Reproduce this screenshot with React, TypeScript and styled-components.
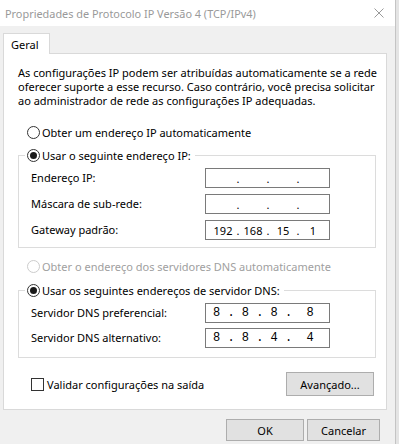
import React from "react";
import styled, { createGlobalStyle } from "styled-components";

const GlobalStyle = createGlobalStyle`
  html, body {
    margin: 0;
    padding: 0;
    background: #f0f0f0;
  }
  body {
    font-family: "Noto Sans", "Open Sans", sans-serif;
    font-size: 11px;
    color: #000;
  }
  * {
    box-sizing: border-box;
  }
`;

const Screen = styled.div`
  display: flex;
  width: 399px;
  height: 444px;
  overflow: hidden;
`;

const Window = styled.div`
  width: 395px;
  display: flex;
  flex-direction: column;
  background: #f0f0f0;
`;

const WindowEdge = styled.div`
  width: 4px;
  border-left: 1px solid #c4c4c4;
  background: #e4e4e4;
`;

const TitleBar = styled.div`
  height: 26px;
  flex-shrink: 0;
  background: #fff;
  display: flex;
  align-items: center;
  justify-content: space-between;
  padding: 0 11px 0 5px;
`;

const Title = styled.span`
  color: #999;
  font-size: 10.9px;
  white-space: nowrap;
`;

const Body = styled.div`
  display: flex;
  flex-direction: column;
  padding: 7px 8px 0 3px;
`;

const TabStrip = styled.div`
  display: flex;
`;

const Tab = styled.div`
  position: relative;
  z-index: 1;
  width: 47px;
  height: 21px;
  margin-bottom: -1px;
  padding-left: 7px;
  display: flex;
  align-items: center;
  background: #fff;
  border: 1px solid #d9d9d9;
  border-bottom: none;
`;

const Panel = styled.div`
  display: flex;
  flex-direction: column;
  background: #fff;
  border: 1px solid #d9d9d9;
  padding: 12px 10px 13px 14px;
`;

const Intro = styled.p`
  margin: 0;
  line-height: 14px;
  white-space: nowrap;
`;

const OptionRow = styled.div<{ $top: number }>`
  display: flex;
  align-items: center;
  height: 16px;
  margin-top: ${({ $top }) => $top}px;
  padding-left: 9px;
`;

const RadioDot = styled.span<{ $checked?: boolean; $disabled?: boolean }>`
  width: 13px;
  height: 13px;
  flex-shrink: 0;
  border-radius: 50%;
  border: 1px solid ${({ $disabled }) => ($disabled ? "#cccccc" : "#333")};
  background: #fff;
  display: grid;
  place-items: center;

  &::after {
    content: "";
    width: 7px;
    height: 7px;
    border-radius: 50%;
    background: #1a1a1a;
    display: ${({ $checked }) => ($checked ? "block" : "none")};
  }
`;

const OptionText = styled.span<{ $disabled?: boolean }>`
  margin-left: 2px;
  white-space: nowrap;
  color: ${({ $disabled }) => ($disabled ? "#a0a0a0" : "#000")};
`;

const Group = styled.fieldset<{ $top: number; $bottom: number }>`
  margin: ${({ $top }) => $top}px 0 0 0;
  min-width: 0;
  border: 1px solid #dcdcdc;
  padding: 5px 0 ${({ $bottom }) => $bottom}px 6px;
`;

const GroupLegend = styled.legend`
  padding: 0 4px 0 2px;
`;

const LegendInner = styled.span`
  display: flex;
  align-items: center;
  height: 16px;
`;

const FieldGrid = styled.div<{ $gap: number }>`
  display: grid;
  grid-template-columns: 174px 125px;
  row-gap: ${({ $gap }) => $gap}px;
  align-items: center;
  margin-left: 6px;
`;

const FieldLabel = styled.span`
  line-height: 20px;
  white-space: nowrap;
`;

const IpBox = styled.div`
  height: 20px;
  border: 1px solid #7a7a7a;
  background: #fff;
  display: flex;
  align-items: center;
  padding-left: 4px;
`;

const Segment = styled.span`
  width: 26px;
  text-align: center;
`;

const Dot = styled.span`
  width: 4px;
  text-align: center;
`;

const MonoBox = styled.div`
  height: 20px;
  border: 1px solid #7a7a7a;
  background: #fff;
  display: flex;
  align-items: center;
  padding-left: 7px;
  font-family: "Liberation Mono", monospace;
  font-size: 12px;
  white-space: pre;
`;

const Footer = styled.div`
  display: flex;
  align-items: center;
  justify-content: space-between;
  margin-top: 14px;
  padding: 0 2px 0 13px;
`;

const CheckRow = styled.label`
  display: flex;
  align-items: center;
  gap: 3px;
`;

const CheckBox = styled.span`
  width: 13px;
  height: 13px;
  border: 1px solid #333;
  background: #fff;
`;

const Button = styled.button<{ $width: number; $height: number }>`
  width: ${({ $width }) => $width}px;
  height: ${({ $height }) => $height}px;
  padding: 0;
  font: inherit;
  color: #000;
  background: #e1e1e1;
  border: 1px solid #adadad;
`;

const ButtonBar = styled.div`
  display: flex;
  justify-content: flex-end;
  gap: 3px;
  margin-top: 9px;
  padding-right: 7px;
`;

function CloseIcon() {
  return (
    <svg width="10" height="10" viewBox="0 0 10 10">
      <path d="M0.5 0.5 L9.5 9.5 M9.5 0.5 L0.5 9.5" stroke="#9a9a9a" strokeWidth="1" fill="none" />
    </svg>
  );
}

function IpField({ parts }: { parts: string[] }) {
  return (
    <IpBox>
      {parts.map((p, i) => (
        <React.Fragment key={i}>
          {i > 0 && <Dot>.</Dot>}
          <Segment>{p}</Segment>
        </React.Fragment>
      ))}
    </IpBox>
  );
}

function Radio({ label, checked, disabled }: { label: string; checked?: boolean; disabled?: boolean }) {
  return (
    <>
      <RadioDot $checked={checked} $disabled={disabled} />
      <OptionText $disabled={disabled}>{label}</OptionText>
    </>
  );
}

export default function App() {
  return (
    <Screen>
      <GlobalStyle />
      <Window>
        <TitleBar>
          <Title>Propriedades de Protocolo IP Versão 4 (TCP/IPv4)</Title>
          <CloseIcon />
        </TitleBar>
        <Body>
          <TabStrip>
            <Tab>Geral</Tab>
          </TabStrip>
          <Panel>
            <Intro>
              As configurações IP podem ser atribuídas automaticamente se a rede
              <br />
              oferecer suporte a esse recurso. Caso contrário, você precisa solicitar
              <br />
              ao administrador de rede as configurações IP adequadas.
            </Intro>

            <OptionRow $top={16}>
              <Radio label="Obter um endereço IP automaticamente" />
            </OptionRow>

            <Group $top={7} $bottom={7}>
              <GroupLegend>
                <LegendInner>
                  <Radio label="Usar o seguinte endereço IP:" checked />
                </LegendInner>
              </GroupLegend>
              <FieldGrid $gap={6}>
                <FieldLabel>Endereço IP:</FieldLabel>
                <IpField parts={["", "", "", ""]} />
                <FieldLabel>Máscara de sub-rede:</FieldLabel>
                <IpField parts={["", "", "", ""]} />
                <FieldLabel>Gateway padrão:</FieldLabel>
                <IpField parts={["192", "168", "15", "1"]} />
              </FieldGrid>
            </Group>

            <OptionRow $top={10}>
              <Radio label="Obter o endereço dos servidores DNS automaticamente" disabled />
            </OptionRow>

            <Group $top={8} $bottom={9}>
              <GroupLegend>
                <LegendInner>
                  <Radio label="Usar os seguintes endereços de servidor DNS:" checked />
                </LegendInner>
              </GroupLegend>
              <FieldGrid $gap={5}>
                <FieldLabel>Servidor DNS preferencial:</FieldLabel>
                <MonoBox>{"8 . 8 . 8 .  8"}</MonoBox>
                <FieldLabel>Servidor DNS alternativo:</FieldLabel>
                <MonoBox>{"8 . 8 . 4 .  4"}</MonoBox>
              </FieldGrid>
            </Group>

            <Footer>
              <CheckRow>
                <CheckBox />
                Validar configurações na saída
              </CheckRow>
              <Button $width={88} $height={24}>Avançado...</Button>
            </Footer>
          </Panel>
          <ButtonBar>
            <Button $width={78} $height={22}>OK</Button>
            <Button $width={73} $height={22}>Cancelar</Button>
          </ButtonBar>
        </Body>
      </Window>
      <WindowEdge />
    </Screen>
  );
}
